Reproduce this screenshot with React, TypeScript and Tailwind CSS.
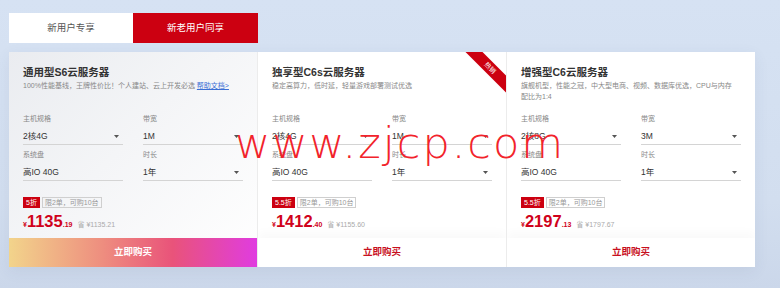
import React from "react";

const FONT = '"Liberation Sans", "Noto Sans CJK SC", sans-serif';

interface Plan {
  title: string;
  desc: React.ReactNode;
  spec: string;
  bandwidth: string;
  disk: string;
  term: string;
  discount: string;
  price: string;
  cents: string;
  save: string;
  hot?: boolean;
  featured?: boolean;
}

const PLANS: Plan[] = [
  {
    title: "通用型S6云服务器",
    desc: (
      <>
        100%性能基线，王牌性价比！个人建站、云上开发必选{" "}
        <span className="text-[#3b6fd4] underline">帮助文档&gt;</span>
      </>
    ),
    spec: "2核4G",
    bandwidth: "1M",
    disk: "高IO 40G",
    term: "1年",
    discount: "5折",
    price: "1135",
    cents: ".19",
    save: "¥1135.21",
    featured: true,
  },
  {
    title: "独享型C6s云服务器",
    desc: "稳定高算力，低时延，轻量游戏部署测试优选",
    spec: "2核4G",
    bandwidth: "1M",
    disk: "高IO 40G",
    term: "1年",
    discount: "5.5折",
    price: "1412",
    cents: ".40",
    save: "¥1155.60",
    hot: true,
  },
  {
    title: "增强型C6云服务器",
    desc: (
      <>
        旗舰机型，性能之冠，中大型电商、视频、数据库优选，CPU与内存
        <br />
        配比为1:4
      </>
    ),
    spec: "2核8G",
    bandwidth: "3M",
    disk: "高IO 40G",
    term: "1年",
    discount: "5.5折",
    price: "2197",
    cents: ".13",
    save: "¥1797.67",
  },
];

function Caret() {
  return (
    <svg width="5" height="3" viewBox="0 0 5 3" className="shrink-0">
      <path d="M0 0h5L2.5 3z" fill="#555" />
    </svg>
  );
}

function Field({ label, value, arrow }: { label: string; value: string; arrow?: boolean }) {
  return (
    <div className="w-[100px]">
      <div className="h-[12px] leading-[12px] text-[7px] text-[#888]">{label}</div>
      <div className="h-[20px] pt-[3px] flex items-center justify-between border-b border-[#d4d4d4] pr-[4px]">
        <span className="text-[8.5px] text-[#333]">{value}</span>
        {arrow && <Caret />}
      </div>
    </div>
  );
}

function PlanCard({ plan, last }: { plan: Plan; last?: boolean }) {
  return (
    <div
      className={`relative overflow-hidden h-[215px] flex flex-col ${
        plan.featured
          ? "bg-[linear-gradient(135deg,#eaecf0_0%,#f4f5f7_45%,#ffffff_100%)]"
          : "bg-white"
      } ${last ? "" : "border-r border-[#ececec]"}`}
    >
      {plan.hot && (
        <div className="absolute top-[10px] right-[-19px] w-[70px] h-[12px] bg-[#cc0010] rotate-45 flex items-center justify-center">
          <span className="text-[6.5px] text-white leading-none">热销</span>
        </div>
      )}
      <div className="pt-[13px] px-[14px]">
        <div className="h-[48px]">
          <div className="text-[10.5px] leading-[14px] font-bold text-[#333]">{plan.title}</div>
          <div className="mt-[1px] text-[7px] leading-[11px] text-[#888] whitespace-nowrap">{plan.desc}</div>
        </div>
        <div className="grid grid-cols-[100px_100px] gap-x-[20px] gap-y-[4px]">
          <Field label="主机规格" value={plan.spec} arrow />
          <Field label="带宽" value={plan.bandwidth} arrow />
          <Field label="系统盘" value={plan.disk} />
          <Field label="时长" value={plan.term} arrow />
        </div>
        <div className="mt-[16px] flex items-center gap-[2px] h-[11px]">
          <span className="h-[11px] px-[3px] bg-[#cc0010] text-white text-[7px] leading-[11px]">
            {plan.discount}
          </span>
          <span className="h-[11px] px-[2px] border border-[#cfcfcf] text-[#999] text-[7px] leading-[9px]">
            限2单，可购10台
          </span>
        </div>
        <div className="mt-[3px] h-[20px] leading-[20px] flex items-baseline text-[#d0021b]">
          <span className="text-[7px] font-bold">¥</span>
          <span className="text-[16.5px] font-bold">{plan.price}</span>
          <span className="text-[7px] font-bold">{plan.cents}</span>
          <span className="ml-[5px] text-[7px] text-[#aaa]">省 {plan.save}</span>
        </div>
      </div>
      <div className="flex-1" />
      <button
        className={`h-[29px] w-full flex items-center justify-center text-[9.5px] font-bold ${
          plan.featured
            ? "text-white bg-[linear-gradient(90deg,#f2d48b_0%,#ee8d7f_38%,#e9537a_66%,#e03ce0_100%)]"
            : "text-[#c8101e] bg-white shadow-[0_-6px_10px_rgba(0,0,0,0.025)]"
        }`}
      >
        立即购买
      </button>
    </div>
  );
}

export default function App() {
  return (
    <div
      className="relative w-[780px] h-[288px] overflow-hidden bg-[linear-gradient(180deg,#d6e2f3_0%,#d2deef_70%,#cbd7ea_100%)] pl-[9px] pt-[13px]"
      style={{ fontFamily: FONT }}
    >
      <div className="flex w-[249px] h-[30px]">
        <div className="w-[124px] bg-white flex items-center justify-center text-[9.5px] text-[#555]">
          新用户专享
        </div>
        <div className="w-[125px] bg-[#cc0011] flex items-center justify-center text-[9.5px] text-white">
          新老用户同享
        </div>
      </div>
      <div className="mt-[9px] grid grid-cols-[249px_249px_248px] w-[746px] shadow-[0_4px_14px_rgba(60,80,120,0.08)]">
        {PLANS.map((p, i) => (
          <PlanCard key={p.title} plan={p} last={i === PLANS.length - 1} />
        ))}
      </div>
      <div
        className="absolute left-[235px] top-[122px] text-[43px] leading-[43px] tracking-[2px] font-light text-[#f2232b] whitespace-nowrap pointer-events-none"
        style={{ fontFamily: '"DejaVu Sans", sans-serif' }}
      >
        www.zjcp.com
      </div>
    </div>
  );
}
